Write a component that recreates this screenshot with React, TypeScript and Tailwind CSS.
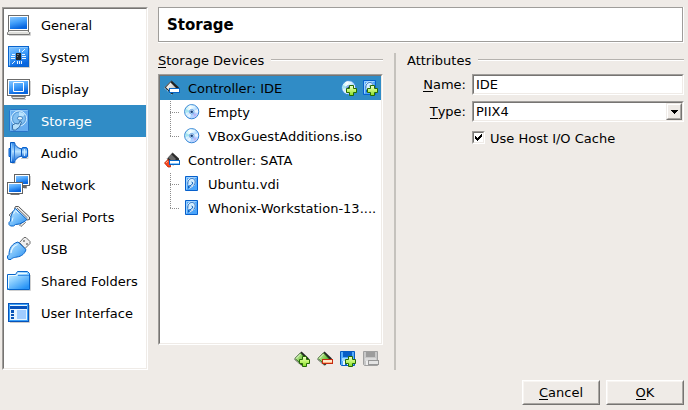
import type { ReactNode } from 'react';

function Bevel({ className, children }: { className: string; children?: ReactNode }) {
  return (
    <div className={`border border-t-[#9f9d9a] border-l-[#9f9d9a] border-r-white border-b-white ${className}`}>
      <div className="flex h-full w-full flex-col border border-t-[#767472] border-l-[#767472] border-r-[#efebe7] border-b-[#efebe7] bg-white">
        {children}
      </div>
    </div>
  );
}

function Gradients() {
  return (
    <svg width="0" height="0" className="absolute">
      <defs>
        <linearGradient id="screen" x1="0" y1="0" x2="0.35" y2="1">
          <stop offset="0" stopColor="#8ac8ff" />
          <stop offset="0.5" stopColor="#43a0fb" />
          <stop offset="1" stopColor="#0866df" />
        </linearGradient>
        <linearGradient id="sky" x1="0" y1="0" x2="1" y2="1">
          <stop offset="0" stopColor="#c8eaff" />
          <stop offset="0.5" stopColor="#78c0fa" />
          <stop offset="1" stopColor="#2389ee" />
        </linearGradient>
        <linearGradient id="folder" x1="0" y1="0" x2="0.7" y2="1">
          <stop offset="0" stopColor="#edfaff" />
          <stop offset="0.45" stopColor="#8fd1ff" />
          <stop offset="1" stopColor="#2793f5" />
        </linearGradient>
        <linearGradient id="horn" x1="0" y1="0" x2="0" y2="1">
          <stop offset="0" stopColor="#2a85e8" />
          <stop offset="0.45" stopColor="#b9e2ff" />
          <stop offset="1" stopColor="#0a60d3" />
        </linearGradient>
        <linearGradient id="green" x1="0" y1="0" x2="0" y2="1">
          <stop offset="0" stopColor="#f3ffd0" />
          <stop offset="0.5" stopColor="#c0f56e" />
          <stop offset="1" stopColor="#86dc28" />
        </linearGradient>
        <linearGradient id="disc" x1="0" y1="0" x2="1" y2="1">
          <stop offset="0" stopColor="#b7f1ef" />
          <stop offset="0.35" stopColor="#eafaff" />
          <stop offset="0.6" stopColor="#a9d5ff" />
          <stop offset="1" stopColor="#d9ccff" />
        </linearGradient>
        <linearGradient id="chipGreen" x1="0" y1="0.2" x2="1" y2="0.8">
          <stop offset="0" stopColor="#d4f3b4" />
          <stop offset="0.6" stopColor="#7cc94a" />
          <stop offset="1" stopColor="#4a9a24" />
        </linearGradient>
        <linearGradient id="chipGray" x1="0" y1="0.2" x2="1" y2="0.8">
          <stop offset="0" stopColor="#ffffff" />
          <stop offset="1" stopColor="#b9b9b6" />
        </linearGradient>
      </defs>
    </svg>
  );
}

function Icon24({ children }: { children: ReactNode }) {
  return (
    <svg width="24" height="24" viewBox="0 0 24 24" className="shrink-0">
      {children}
    </svg>
  );
}

const GeneralIcon = () => (
  <Icon24>
    <path d="M2 22.5h21.5V19" fill="none" stroke="#d2d2d2" />
    <rect x="1.5" y="2.5" width="20" height="15" fill="#fff" stroke="#6c6c6c" />
    <rect x="3" y="4" width="17" height="12" fill="url(#screen)" />
    <path d="M2.5 17.5h18l2 2v2H.5v-2z" fill="#dededb" stroke="#777" />
    <path d="M2.5 18.5h18" stroke="#f8f8f6" />
  </Icon24>
);

const SystemIcon = () => (
  <Icon24>
    <path d="M3 22.5h19.5V3" fill="none" stroke="#d0d0cf" />
    <rect x="1.5" y="1.5" width="20" height="20" fill="url(#screen)" stroke="#0863cd" />
    <path d="M2.5 20.5v-18h18" fill="none" stroke="#8ac8ff" />
    <rect x="9" y="8" width="5" height="7" fill="#1e252c" />
    <path d="M10 9.5h2M10 11.5h1" stroke="#777" />
    <path
      d="M5 9.5h3M4 11.5h4M4 13.5h4M15 9.5h3M15 11.5h4M15 13.5h4M12.5 4v3M10.5 16v3M12.5 16v3M14.5 16v3M15 7l3-3M5 19l3-3"
      stroke="#e7f5ff"
      fill="none"
    />
  </Icon24>
);

const DisplayIcon = () => (
  <Icon24>
    <path d="M6 22.5h13M23.5 18V4" fill="none" stroke="#d2d2d2" />
    <rect x=".5" y="2.5" width="22" height="16" fill="#fff" stroke="#6b6b6b" />
    <rect x="2" y="4" width="19" height="13" fill="url(#screen)" />
    <path d="M6.5 5.5h10v9h-10z" fill="none" stroke="#fff" />
    <path d="M4.5 19.5h14l-1 2h-12z" fill="#e3e3e1" stroke="#777" />
  </Icon24>
);

const StorageIcon = () => (
  <Icon24>
    <rect x="2.5" y=".5" width="19" height="22" rx="1" fill="#67adf0" stroke="#2775c8" />
    <path d="M3.5 21V1.5h17" fill="none" stroke="#8cc6f7" />
    <circle cx="12" cy="9.5" r="7.6" fill="#83c0f1" stroke="#d6efff" />
    <circle cx="12" cy="9.5" r="6.5" fill="none" stroke="#347ec5" strokeWidth=".6" />
    <path d="M12 3v6l6-3c-1-2-3-3-6-3" fill="#b9e3ff" />
    <ellipse cx="13" cy="9.3" rx="2.6" ry="1.8" fill="#eaf8ff" stroke="#286eb2" strokeWidth=".8" />
    <path d="M5.5 19v-3l3-1.5 3 .5 1.5-3 1.5 1-2 5-4 3H6z" fill="#b4def9" stroke="#2c66a0" strokeWidth=".9" />
  </Icon24>
);

const AudioIcon = () => (
  <Icon24>
    <path d="M9 21l-1 1.5H5M14 17.5h7V9" fill="none" stroke="#cacaca" />
    <path d="M2 7.5h3v8H2z" fill="#3d99f2" stroke="#075dcb" />
    <path d="M14.5 7.5h1v-1h4v1h1v8h-1v1h-4v-1h-1z" fill="url(#horn)" stroke="#0761ce" />
    <path d="M3.5 1.5h4c.5 3 3 5.500 7 6.500v7c-4 1-6.500 3.500-7 6.500h-4z" fill="url(#horn)" stroke="#0659c0" />
    <path d="M4.500 2.500v18" stroke="#8ccaff" />
    <path d="M7.500 3v17" stroke="#2f80dd" />
    <path d="M17.500 8v7" stroke="#d0ecff" />
  </Icon24>
);

const NetworkIcon = () => (
  <Icon24>
    <path d="M17 15.500h3M23.500 12V3" fill="none" stroke="#d0d0d0" />
    <rect x="7.500" y="1.500" width="15" height="11" fill="#fff" stroke="#626262" />
    <rect x="9" y="3" width="12" height="8" fill="url(#screen)" />
    <path d="M15 13.500h4.500v1H16" fill="#ddd" stroke="#686868" />
    <rect x=".5" y="9.500" width="15" height="11" fill="#fff" stroke="#626262" />
    <rect x="2" y="11" width="12" height="8" fill="url(#screen)" />
    <path d="M3.500 21.500h9" stroke="#737373" />
  </Icon24>
);

const SerialIcon = () => (
  <Icon24>
    <path d="M7.500 3.500l1-2h3l11 10.500v2.500l-2.500.5z" fill="#eee" stroke="#555" />
    <path d="M10 3l10.500 10" stroke="#666" strokeWidth=".9" />
    <path d="M2 10l4-3.500 1.500 1.500-4 3.500z" fill="#eee" stroke="#555" strokeWidth=".8" />
    <path d="M12.500 20l4.500-4 1.500 1.500-4.500 4z" fill="#eee" stroke="#555" strokeWidth=".8" />
    <path d="M8.500 3.500L20 14.500l-2.500 2-5 2.500-4 .5-2 1.500H3.500L2 19.500v-2L3.500 16l.5-5 2-4.500z" fill="url(#sky)" stroke="#0864c9" />
    <path d="M6.500 9l2-3.500 3 3M5 16.500l1-4" fill="none" stroke="#e4f6ff" />
  </Icon24>
);

const UsbIcon = () => (
  <Icon24>
    <path d="M12.500 5.500l4.500-5h2l4 4v2l-5 5z" fill="#eee" stroke="#686868" />
    <path d="M16.500 3.500l1 1M19.500 6.500l1 1" stroke="#444" strokeWidth="1.500" />
    <path d="M11 5l8 7.500c-1 4-4.500 7-9 7.500-2 .5-3 .5-4.500 1L4 22.500H1.500L.5 21v-2L2 17.500c0-6 3-11 9-12.500z" fill="url(#sky)" stroke="#0864ca" />
    <path d="M4 16c.5-4 3-7.500 6.500-8.500" fill="none" stroke="#e4f6ff" strokeWidth="1.300" />
  </Icon24>
);

const FolderIcon = () => (
  <Icon24>
    <path d="M2 21.500h21.500V6" fill="none" stroke="#d0d0d0" />
    <path d="M.5 5.500h8l2-3h10l2 2v16H.5z" fill="url(#folder)" stroke="#0765ca" />
    <path d="M1.500 19V6.500h8l1.500-2h9" fill="none" stroke="#ecfaff" />
    <path d="M11 6.500h11" stroke="#3c90e6" />
  </Icon24>
);

const InterfaceIcon = () => (
  <Icon24>
    <path d="M3 21.500h19.500V4" fill="none" stroke="#ccc" />
    <rect x="1.500" y="2.500" width="20" height="18" fill="#3ba1fa" stroke="#0753ba" />
    <rect x="3" y="4" width="17" height="15" fill="#e7f4ff" />
    <path d="M3 5h17v3H3z" fill="#0751bb" />
    <path d="M4 9h3v3H4zM4 13h3v2H4zM4 16h3v2H4z" fill="#0752b8" />
    <path d="M10 9h9v9h-9z" fill="#a1ccff" />
  </Icon24>
);

function Icon16({ children }: { children: ReactNode }) {
  return (
    <svg width="16" height="16" viewBox="0 0 16 16" className="shrink-0">
      {children}
    </svg>
  );
}

const Plus = () => (
  <path d="M8.500 5.500h4v3h3v4h-3v3h-4v-3h-3v-4h3z" fill="url(#green)" stroke="#256b05" />
);

const Disc = () => (
  <>
    <circle cx="7.700" cy="7.700" r="7.100" fill="url(#disc)" stroke="#3485d5" />
    <path d="M7.700 7.700L4 2l3-1M7.700 7.700L14 5v4M7.700 7.700L3 12l3 2" fill="#fff" opacity=".7" />
    <path d="M7.700 7.700L2 5l-1 4" fill="#7dd7e8" opacity=".6" />
    <path d="M7.700 7.700l3 5 2-2" fill="#bca3ed" opacity=".7" />
    <circle cx="7.700" cy="7.700" r="2.300" fill="#dceeff" stroke="#5a9be0" strokeWidth=".8" />
    <circle cx="7.700" cy="7.700" r="1.300" fill="#163d78" />
  </>
);

const Drive = () => (
  <>
    <path d="M1.500.5h12v14h-12z" fill="#4aa4fa" stroke="#0760cc" />
    <path d="M2.500 13.500v-12h10" fill="none" stroke="#9ad1ff" />
    <circle cx="7.500" cy="6" r="4" fill="#d2edff" stroke="#fff" />
    <path d="M4 8.500C3 4.500 6 2 8.500 2.500c3 .5 3.500 4.500 1.500 6.500L6.500 12H4.500v-2l2.500-.5 2-2.500-1.500-1" fill="none" stroke="#1160bb" />
    <path d="M5.500 12.500L9.500 9.500" stroke="#fff" />
  </>
);

const DiscIcon = () => <Icon16><Disc /></Icon16>;
const DriveIcon = () => <Icon16><Drive /></Icon16>;

const IdeIcon = () => (
  <Icon16>
    <path d="M7.500.5l7.500 7-7 7-7.500-7z" fill="#222" />
    <path d="M6.500 2.500l5.500 5.500-4.500 4.500-5.500-5z" fill="url(#chipGray)" />
    <path d="M.5 8l7 6.500" stroke="#e2e2e2" strokeDasharray="1.500 1.500" />
    <path d="M1 7.500l6-6" stroke="#8a8a8a" />
    <rect x="5.500" y="8.500" width="10" height="4" fill="#fff" stroke="#0765c5" />
  </Icon16>
);

const SataIcon = () => (
  <Icon16>
    <path d="M8.500.5l6.500 6v3l-6 4-6-6.500z" fill="#2c2c2c" />
    <path d="M7.500 2.500l4.500 4.500-3 3-4.500-4z" fill="#6a6a6a" />
    <path d="M3 6.500l5-5" stroke="#999" strokeDasharray="1 1" />
    <path d="M.5 11L4 7.500l2.500 3V15H4z" fill="#f84721" stroke="#be2500" strokeWidth=".8" />
    <path d="M2 11l2-2" stroke="#ffab88" />
    <rect x="5.500" y="8.500" width="10" height="4" fill="#fff" stroke="#0765c5" />
    <path d="M6 11.500h9" stroke="#8ac8ff" />
  </Icon16>
);

const Chip = () => (
  <>
    <path d="M7.500.5l7.500 7-7 7-7.500-7z" fill="#232823" />
    <path d="M6.500 2l5.500 6-4.500 5-6.500-5.500z" fill="url(#chipGreen)" stroke="#3d8425" strokeWidth=".7" />
    <path d="M.5 8.500l7 6" stroke="#4a5a44" strokeDasharray="1.500 1" />
    <path d="M2 7.500l4.500-4.500" stroke="#e6f8d4" />
  </>
);

const AddControllerIcon = () => <Icon16><Chip /><Plus /></Icon16>;
const RemoveControllerIcon = () => (
  <Icon16>
    <Chip />
    <rect x="5.500" y="8.500" width="10" height="4" fill="#ffe9cc" stroke="#c52a10" />
    <path d="M6 11.500h9" stroke="#ffb080" />
  </Icon16>
);
const AddDiscIcon = () => <Icon16><Disc /><Plus /></Icon16>;
const AddDriveIcon = () => <Icon16><Drive /><Plus /></Icon16>;
const AddAttachmentIcon = () => (
  <Icon16>
    <path d="M.5.5h14v14H1.500l-1-1z" fill="#55adfa" stroke="#075bc2" />
    <path d="M3 1h9v5H3z" fill="#075dc6" />
    <path d="M2 7h11v3H2z" fill="#a1d9ff" />
    <path d="M3 10h9v4H3z" fill="#e8f7ff" />
    <path d="M5 11h2v3H5z" fill="#1667b8" />
    <Plus />
  </Icon16>
);
const RemoveAttachmentIcon = () => (
  <Icon16>
    <path d="M.5.5h14v14H1.500l-1-1z" fill="#c8c8c8" stroke="#a0a0a0" />
    <path d="M3 1h9v5H3z" fill="#9c9c9c" />
    <path d="M2 7h11v3H2z" fill="#dcdcdc" />
    <path d="M3 10h9v4H3z" fill="#eee" />
    <path d="M5 11h2v3H5z" fill="#999" />
    <rect x="5.500" y="9.500" width="10" height="4" fill="#e4e4e4" stroke="#979797" />
  </Icon16>
);

const sections = [
  { label: 'General', Glyph: GeneralIcon },
  { label: 'System', Glyph: SystemIcon },
  { label: 'Display', Glyph: DisplayIcon },
  { label: 'Storage', Glyph: StorageIcon, selected: true },
  { label: 'Audio', Glyph: AudioIcon },
  { label: 'Network', Glyph: NetworkIcon },
  { label: 'Serial Ports', Glyph: SerialIcon },
  { label: 'USB', Glyph: UsbIcon },
  { label: 'Shared Folders', Glyph: FolderIcon },
  { label: 'User Interface', Glyph: InterfaceIcon },
];

function Sidebar() {
  return (
    <Bevel className="h-[363px] w-[146px] shrink-0">
      {sections.map(({ label, Glyph, selected }) => (
        <div
          key={label}
          className={`flex h-8 items-center gap-[10px] pl-[3px] whitespace-nowrap ${selected ? 'bg-[#308cc6] text-white' : ''}`}
        >
          <Glyph />
          <span>{label}</span>
        </div>
      ))}
    </Bevel>
  );
}

function Mnemonic({ text }: { text: string }) {
  return (
    <span className="whitespace-nowrap">
      <span className="inline-block h-[15px] border-b border-black leading-[15px]">{text[0]}</span>
      {text.slice(1)}
    </span>
  );
}

function Rule({ className = '' }: { className?: string }) {
  return <div className={`h-[2px] flex-1 border-t border-b border-t-[#b5b2ae] border-b-white ${className}`} />;
}

function TreeLeaf({ icon, label, last }: { icon: ReactNode; label: string; last?: boolean }) {
  return (
    <div className="flex h-6 items-center pl-[10px] whitespace-nowrap">
      <svg width="14" height="24" className="shrink-0">
        <path d={last ? 'M.5 1v12' : 'M.5 1v24'} stroke="#8c8c8c" strokeDasharray="1 1" />
        <path d="M0 12.500h10" stroke="#8c8c8c" strokeDasharray="1 1" />
      </svg>
      {icon}
      <span className="ml-2">{label}</span>
    </div>
  );
}

function DeviceTree() {
  return (
    <Bevel className="h-[271px] w-[225px]">
      <div className="flex h-6 items-center bg-[#308cc6] pr-[3px] pl-1">
        <IdeIcon />
        <span className="ml-2 flex-1">Controller: IDE</span>
        <div className="flex gap-[5px]">
          <AddDiscIcon />
          <AddDriveIcon />
        </div>
      </div>
      <TreeLeaf icon={<DiscIcon />} label="Empty" />
      <TreeLeaf icon={<DiscIcon />} label="VBoxGuestAdditions.iso" last />
      <div className="flex h-6 items-center pl-1">
        <SataIcon />
        <span className="ml-2">Controller: SATA</span>
      </div>
      <TreeLeaf icon={<DriveIcon />} label="Ubuntu.vdi" />
      <TreeLeaf icon={<DriveIcon />} label="Whonix-Workstation-13...." last />
    </Bevel>
  );
}

function Attributes() {
  return (
    <div className="w-[277px]">
      <div className="flex h-[31px] items-center pt-1">
        <span className="w-[71px]">Attributes</span>
        <Rule className="-mt-[1px] flex-none basis-[206px]" />
      </div>
      <div className="flex h-[21px] items-center">
        <div className="w-[65px] pr-[6px] text-right"><Mnemonic text="Name:" /></div>
        <Bevel className="h-[21px] w-[212px]">
          <span className="pl-[2px] leading-[17px]">IDE</span>
        </Bevel>
      </div>
      <div className="mt-[6px] flex h-[21px] items-center">
        <div className="w-[65px] pr-[6px] text-right"><Mnemonic text="Type:" /></div>
        <Bevel className="h-[21px] w-[212px]">
          <div className="flex h-[17px] items-center justify-between">
            <span className="pl-[2px] leading-[17px]">PIIX4</span>
            <div className="flex h-[17px] w-4 items-center justify-center border border-t-[#efebe7] border-r-[#767472] border-b-[#767472] border-l-[#efebe7] bg-[#efebe7]">
              <div className="flex h-full w-full items-center justify-center border border-t-white border-r-[#aaa7a3] border-b-[#aaa7a3] border-l-white">
                <svg width="7" height="4" shapeRendering="crispEdges">
                  <path d="M0 0h7v1H6v1H5v1H4v1H3V3H2V2H1V1H0z" />
                </svg>
              </div>
            </div>
          </div>
        </Bevel>
      </div>
      <div className="mt-[9px] ml-[65px] flex h-[13px] items-center gap-[5px]">
        <Bevel className="h-[13px] w-[13px]">
          <svg width="9" height="9" shapeRendering="crispEdges">
            <path d="M1 3h1v1h1v1h1V4h1V3h1V2h1V1h1v3H7v1H6v1H5v1H4v1H3V7H2V6H1z" />
          </svg>
        </Bevel>
        <span className="pt-[2px] whitespace-nowrap">Use Host I/O Cache</span>
      </div>
    </div>
  );
}

function Button({ text }: { text: string }) {
  return (
    <div className="h-[25px] w-[78px] border border-t-white border-r-[#767472] border-b-[#767472] border-l-white">
      <div className="flex h-full items-center justify-center border border-t-[#f8f5f2] border-r-[#aaa7a3] border-b-[#aaa7a3] border-l-[#f8f5f2]">
        <Mnemonic text={text} />
      </div>
    </div>
  );
}

export default function App() {
  return (
    <div className="h-[410px] w-[688px] overflow-hidden bg-[#efebe7] pt-[7px] pl-[2px] font-['DejaVu_Sans',sans-serif] text-[13px] leading-[15px] text-black">
      <Gradients />
      <div className="flex gap-[10px]">
        <Sidebar />
        <div className="w-[526px]">
          <div className="h-9 border-r border-b border-white">
            <div className="flex h-[35px] items-center border border-[#9f9d9a] bg-white pt-[2px] pl-2 text-[15px] font-bold">
              Storage
            </div>
          </div>
          <div className="flex">
            <div className="w-[225px]">
              <div className="flex h-[31px] items-center pt-1">
                <span className="w-[113px]"><Mnemonic text="Storage Devices" /></span>
                <Rule className="-mt-[1px]" />
              </div>
              <DeviceTree />
              <div className="mt-[6px] flex justify-end gap-[7px] pr-1">
                <AddControllerIcon />
                <RemoveControllerIcon />
                <AddAttachmentIcon />
                <RemoveAttachmentIcon />
              </div>
            </div>
            <div className="mt-[10px] mr-[11px] ml-[11px] h-[317px] w-[2px] bg-[#c5c2bd]" />
            <Attributes />
          </div>
        </div>
      </div>
      <div className="mt-[10px] flex justify-end gap-[6px] pr-1">
        <Button text="Cancel" />
        <Button text="OK" />
      </div>
    </div>
  );
}
